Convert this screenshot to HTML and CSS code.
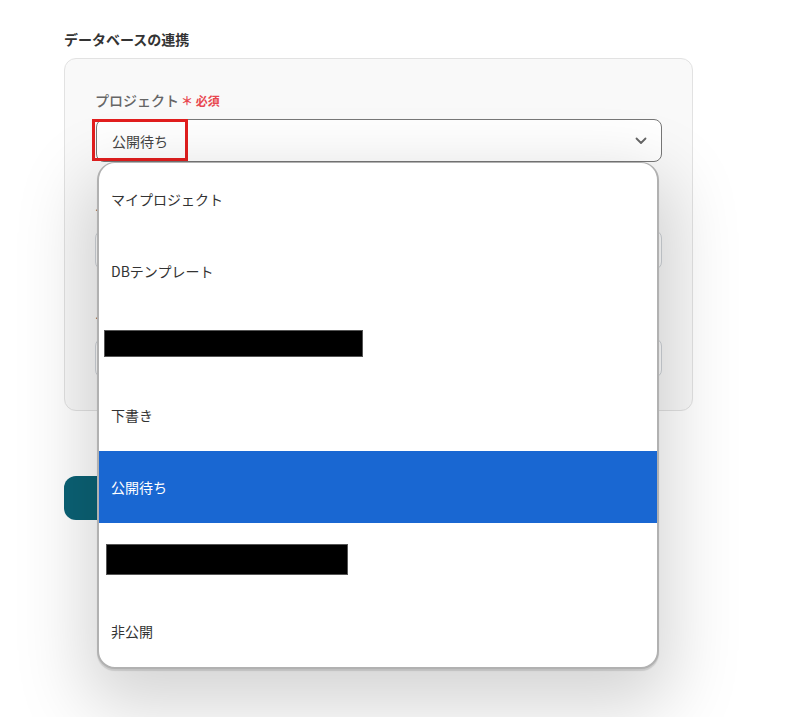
FILE: index.html
```html
<!DOCTYPE html>
<html lang="ja">
<head>
<meta charset="UTF-8" />
<title>データベースの連携</title>
<link rel="stylesheet" href="styles.css">
</head>
<body>

<div class="page">
  <h3 class="section-title">データベースの連携</h3>

  <div class="card">
    <div class="field">
      <label class="field-label">プロジェクト<span class="req">＊ 必須</span></label>
      <div class="select-wrap">
        <div class="select">
          <span class="select-value">公開待ち</span>
          <svg class="chevron" width="12" height="8" viewBox="0 0 12 8"><path d="M1.5 1.5 L6 6 L10.5 1.5" fill="none" stroke="#666" stroke-width="1.8" stroke-linecap="round" stroke-linejoin="round"/></svg>
        </div>
        <div class="highlight"></div>

        <!-- 開いたままのプルダウン -->
        <ul class="dropdown">
          <li>マイプロジェクト</li>
          <li>DBテンプレート</li>
          <li><span class="mask mask-a"></span></li>
          <li>下書き</li>
          <li class="selected">公開待ち</li>
          <li><span class="mask mask-b"></span></li>
          <li>非公開</li>
        </ul>
      </div>
    </div>

    <div class="field">
      <label class="field-label">テーブル</label>
      <div class="input"></div>
    </div>

    <div class="field">
      <label class="field-label">テーブルID</label>
      <div class="input"></div>
    </div>
  </div>

  <button class="btn-next"></button>
</div>

</body>
</html>
```

FILE: styles.css
```css
html, body {
  margin: 0;
  background: #fff;
}
body {
  font-family: "Noto Sans CJK JP", "Noto Sans", sans-serif;
  color: #333;
  height: 717px;
  overflow: hidden;
}
.page {
  padding: 29px 0 0 64px;
  width: 629px;
}
.section-title {
  margin: 0 0 8px;
  font-size: 14px;
  font-weight: bold;
  line-height: 21px;
  color: #333;
}
.card {
  background: #f9f9f9;
  border: 1px solid #e2e2e2;
  border-radius: 12px;
  padding: 31px 30px 32px 30px;
  display: flex;
  flex-direction: column;
  gap: 38px;
}
.field {
  display: flex;
  flex-direction: column;
  gap: 8px;
}
.field-label {
  font-size: 14px;
  line-height: 20px;
  color: #666;
  font-weight: 500;
}
.req {
  color: #e8474f;
  font-size: 12px;
  font-weight: bold;
  margin-left: 2px;
}
.select-wrap {
  position: relative;
}
.select {
  height: 41px;
  background: #fff;
  border: 1px solid #777;
  border-radius: 8px;
  display: flex;
  align-items: center;
  justify-content: space-between;
  padding: 0 14px 0 15px;
  margin-left: 1px;
  font-size: 14px;
  color: #444;
}
.chevron {
  display: block;
}
.highlight {
  position: absolute;
  left: -3px;
  top: 0;
  width: 90px;
  height: 36px;
  border: 3px solid #e21e1e;
}
.input {
  height: 38px;
  margin-top: 2px;
  background: #fff;
  border: 1px solid #cfd3d8;
  border-radius: 8px;
}
.dropdown {
  position: absolute;
  left: 2px;
  top: 43px;
  width: 558px;
  margin: 0;
  padding: 0;
  list-style: none;
  background: #fff;
  border: 2px solid #b1b1b1;
  border-top-width: 1px;
  border-radius: 18px;
  overflow: hidden;
  box-shadow: 0 2px 1px rgba(0,0,0,0.12), 0 26px 70px 12px rgba(0,0,0,0.17);
  z-index: 5;
}
.dropdown li {
  height: 72px;
  display: flex;
  align-items: center;
  padding-left: 12px;
  font-size: 14px;
  color: #333;
}
.dropdown li.selected {
  background: #1967d2;
  color: #fff;
}
.mask {
  display: block;
  background: #000;
  border: 1px solid #555;
}
.mask-a {
  width: 257px;
  height: 25px;
  margin-left: -7px;
}
.mask-b {
  width: 240px;
  height: 29px;
  margin-left: -5px;
  margin-top: 1px;
}
.btn-next {
  display: block;
  margin-top: 65px;
  width: 180px;
  height: 44px;
  border: none;
  border-radius: 12px;
  background: #0b6275;
}
```
